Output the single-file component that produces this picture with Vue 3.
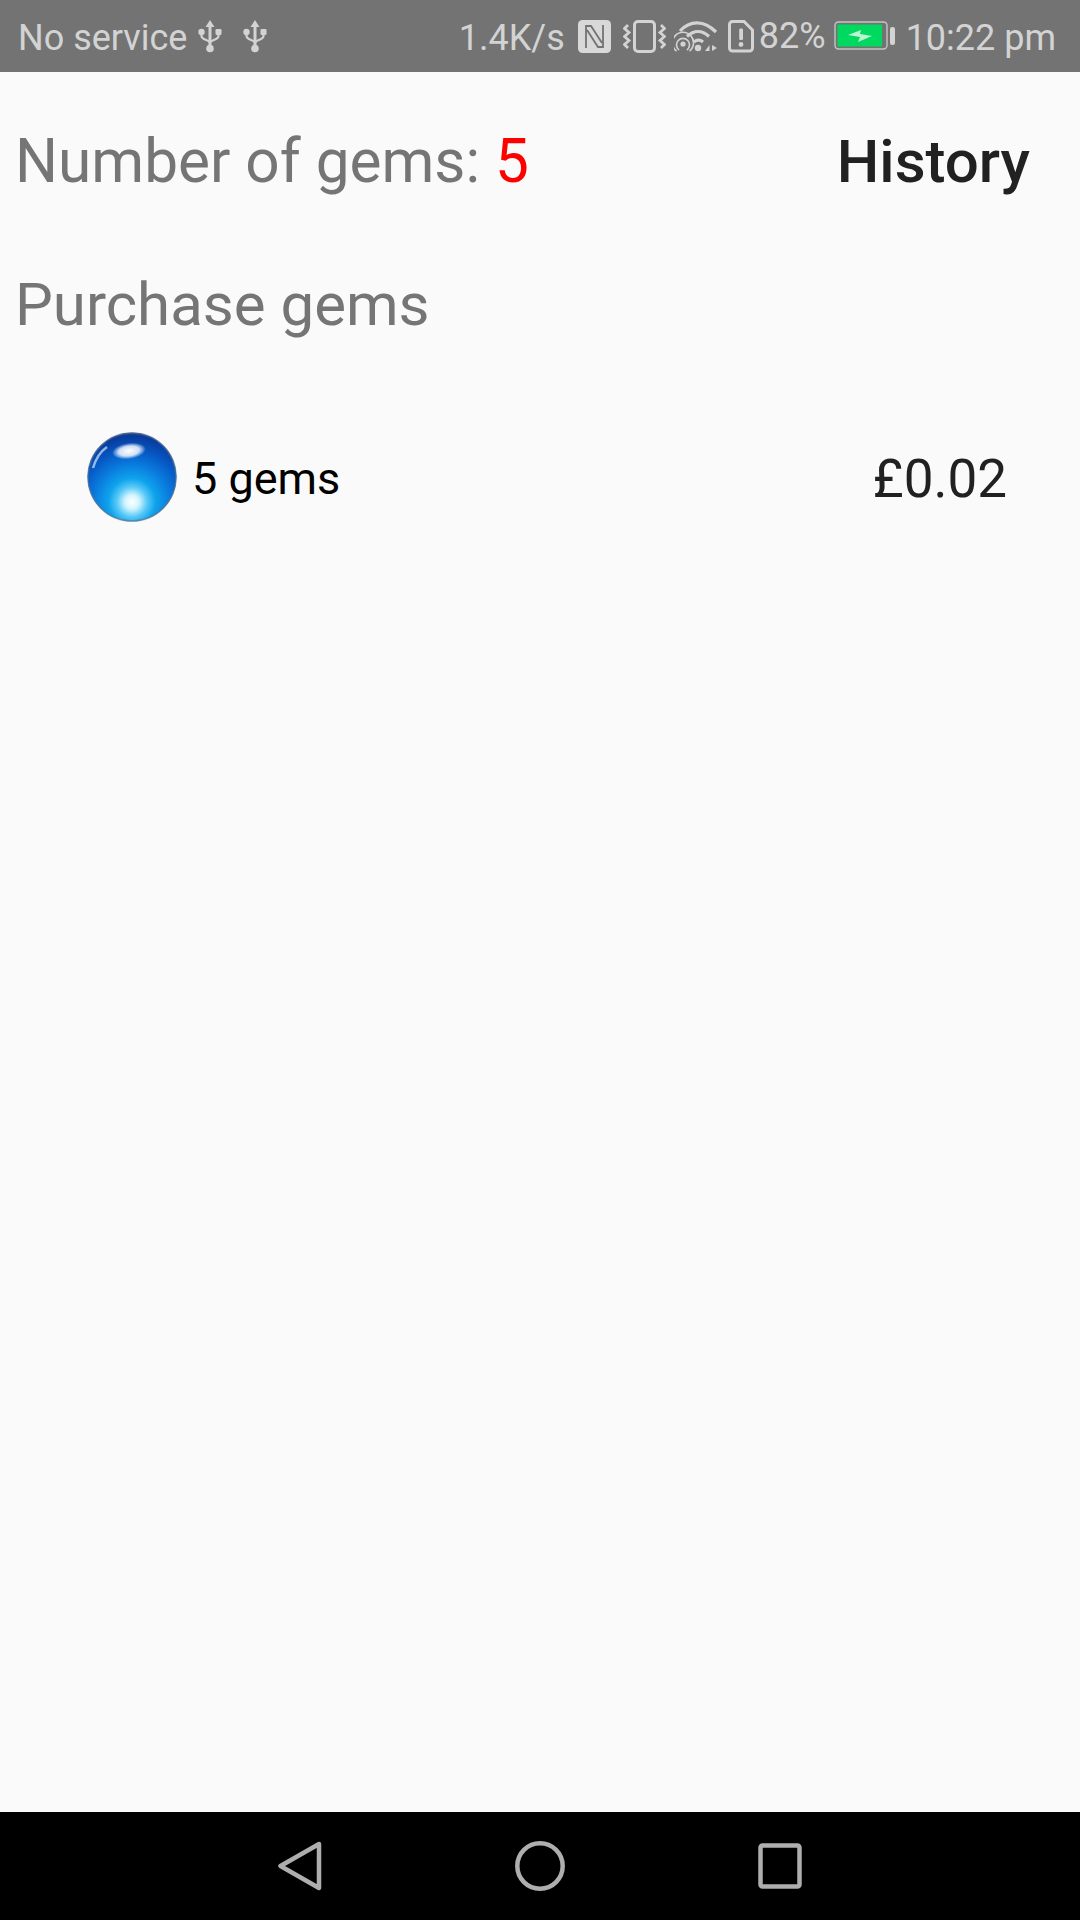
<template>
  <div class="screen">
    <!-- Status bar -->
    <div class="status-bar">
      <div class="status-left">
        <span class="status-text">No service</span>
        <svg class="usb" width="24" height="34" viewBox="0 0 24 34">
          <path d="M12 1l-4.5 7h3V27h3V8h3z" fill="#d3d3d3" />
          <circle cx="12" cy="29.5" r="3.8" fill="#d3d3d3" />
          <circle cx="3.5" cy="13" r="3.2" fill="#d3d3d3" />
          <rect x="17.5" y="10" width="6" height="6" rx="1.2" fill="#d3d3d3" />
          <path d="M3.5 14v3c0 4 8.5 4 8.5 7M20.5 14v3c0 4 -8.5 4 -8.5 7" fill="none" stroke="#d3d3d3" stroke-width="2.2" />
        </svg>
        <svg class="usb usb-second" width="24" height="34" viewBox="0 0 24 34">
          <path d="M12 1l-4.5 7h3V27h3V8h3z" fill="#d3d3d3" />
          <circle cx="12" cy="29.5" r="3.8" fill="#d3d3d3" />
          <circle cx="3.5" cy="13" r="3.2" fill="#d3d3d3" />
          <rect x="17.5" y="10" width="6" height="6" rx="1.2" fill="#d3d3d3" />
          <path d="M3.5 14v3c0 4 8.5 4 8.5 7M20.5 14v3c0 4 -8.5 4 -8.5 7" fill="none" stroke="#d3d3d3" stroke-width="2.2" />
        </svg>
      </div>
      <div class="status-right">
        <span class="status-text speed">1.4K/s</span>
        <!-- NFC -->
        <svg class="nfc" width="33" height="33" viewBox="0 0 33 33">
          <rect width="33" height="33" rx="4.5" fill="#d8d8d8" />
          <path d="M8 28V6h5l11 17M25 5v22h-5L9 10" fill="none" stroke="#737373" stroke-width="1.800" />
        </svg>
        <!-- Vibrate -->
        <svg class="vibrate" width="43" height="33" viewBox="0 0 43 33">
          <rect x="11.5" y="1.5" width="20" height="30" rx="3.5" fill="none" stroke="#d3d3d3" stroke-width="3" />
          <path d="M5 5L1.500 8.500 6 12.500 1.500 16.500 6 20.500 1.500 24.500 5 28M38 5l3.500 3.500-4.500 4 4.500 4-4.500 4 4.500 4-3.500 3.500" fill="none" stroke="#d3d3d3" stroke-width="2.800" />
        </svg>
        <!-- Wifi with hotspot -->
        <svg class="wifi" width="44" height="34" viewBox="0 0 44 34">
          <path d="M6 12C16 1 30 1 42 13M13 17.500c7-6.500 15-6.500 22 0M20 23c3-2.500 6-2.500 9 0" fill="none" stroke="#d3d3d3" stroke-width="3.200" />
          <circle cx="24" cy="29" r="3.200" fill="#d3d3d3" />
          <circle cx="9" cy="25" r="2.600" fill="#d3d3d3" />
          <path d="M5 31a6.500 6.500 0 1 1 8 0M2.500 32a10.500 10.500 0 1 1 13 0" fill="none" stroke="#d3d3d3" stroke-width="1.600" />
          <path d="M31 32l4.500-6v6zM38 26l5 3-5 3z" fill="#d3d3d3" />
        </svg>
        <!-- SIM alert -->
        <svg class="sim" width="26" height="33" viewBox="0 0 26 33">
          <path d="M4.500 1.500h11.500l8.500 8.500v18a3 3 0 0 1-3 3H4.500a3 3 0 0 1-3-3V4.500a3 3 0 0 1 3-3z" fill="none" stroke="#d3d3d3" stroke-width="3" />
          <rect x="11.200" y="8.500" width="3.800" height="11.500" rx="1.200" fill="#d3d3d3" />
          <circle cx="13" cy="24.500" r="2.400" fill="#d3d3d3" />
        </svg>
        <span class="status-text percent">82%</span>
        <!-- Battery -->
        <svg class="battery" width="61" height="30" viewBox="0 0 61 30">
          <rect x="1" y="1" width="52" height="27" rx="3.500" fill="none" stroke="#c4c4c4" stroke-width="1.400" />
          <rect x="3.500" y="3.500" width="44.500" height="22" fill="#00d95f" />
          <path d="M14 14l13-5-1 4 12 2-14 6 2-5z" fill="#bdf5d3" />
          <rect x="56" y="6" width="5" height="18" rx="2" fill="#d3d3d3" />
        </svg>
        <span class="status-text time">10:22 pm</span>
      </div>
    </div>

    <main class="content">
      <div class="top-row">
        <div class="gem-count">Number of gems: <span class="count">{{ gemCount }}</span></div>
        <div class="history">History</div>
      </div>
      <div class="purchase-title">Purchase gems</div>

      <div class="product" v-for="item in products" :key="item.name">
        <svg class="gem" width="90" height="90" viewBox="0 0 90 90">
          <defs>
            <radialGradient id="gemBody" cx="50%" cy="78%" r="78%">
              <stop offset="0" stop-color="#ffffff" />
              <stop offset="0.1" stop-color="#d4f5ff" />
              <stop offset="0.22" stop-color="#55c8f6" />
              <stop offset="0.34" stop-color="#0ea3ec" />
              <stop offset="0.52" stop-color="#0a7fe0" />
              <stop offset="0.72" stop-color="#065cc8" />
              <stop offset="0.95" stop-color="#083a9c" />
              <stop offset="1" stop-color="#27477f" />
            </radialGradient>
            <radialGradient id="gemShine" cx="50%" cy="50%" r="50%">
              <stop offset="0" stop-color="#ffffff" />
              <stop offset="0.6" stop-color="#f2f8ff" stop-opacity="0.85" />
              <stop offset="1" stop-color="#ffffff" stop-opacity="0" />
            </radialGradient>
          </defs>
          <circle cx="45" cy="45" r="44.500" fill="url(#gemBody)" />
          <circle cx="45" cy="45" r="44" fill="none" stroke="#5b7390" stroke-opacity="0.65" stroke-width="1.500" />
          <ellipse cx="42" cy="19" rx="17" ry="8" fill="url(#gemShine)" transform="rotate(-8 42 19)" />
          <path d="M6 36C9 26 14 19 20 15" fill="none" stroke="#cfe4fb" stroke-opacity="0.7" stroke-width="2.500" />
        </svg>
        <span class="product-name">{{ item.name }}</span>
        <span class="product-price">{{ item.price }}</span>
      </div>
    </main>

    <!-- Navigation bar -->
    <div class="nav-bar">
      <svg width="44" height="52" viewBox="0 0 44 52">
        <path d="M41 4L2.500 26 41 48z" fill="none" stroke="#aeaeae" stroke-width="4.500" stroke-linejoin="round" />
      </svg>
      <svg width="50" height="50" viewBox="0 0 50 50">
        <circle cx="25" cy="25" r="22.700" fill="none" stroke="#aeaeae" stroke-width="4.500" />
      </svg>
      <svg width="44" height="46" viewBox="0 0 44 46">
        <rect x="2.500" y="2.500" width="39" height="41" rx="2" fill="none" stroke="#aeaeae" stroke-width="4.500" />
      </svg>
    </div>
  </div>
</template>

<script setup>
import { ref } from "vue";

const gemCount = ref(5);

const products = [{ name: "5 gems", price: "£0.02" }];
</script>

<style>
body {
  background: #fafafa;
}
</style>

<style scoped>
.screen {
  width: 1080px;
  height: 1920px;
  display: flex;
  flex-direction: column;
  background: #fafafa;
  font-family: Roboto, sans-serif;
  overflow: hidden;
}

.status-bar {
  height: 72px;
  flex: none;
  display: flex;
  align-items: center;
  justify-content: space-between;
  background: #737373;
  padding: 0 24px 0 18px;
}

.status-left,
.status-right {
  display: flex;
  align-items: center;
}

.status-text {
  color: #d3d3d3;
  font-size: 36px;
  line-height: 68px;
  padding-top: 4px;
  white-space: nowrap;
}

.usb {
  margin-left: 11px;
}

.usb-second {
  margin-left: 21px;
}

.nfc {
  margin-left: 13px;
}

.vibrate {
  margin-left: 12px;
}

.wifi {
  margin-left: 8px;
}

.sim {
  margin-left: 10px;
}

.percent {
  margin-left: 5px;
  margin-bottom: 4px;
}

.battery {
  margin-left: 8px;
}

.time {
  margin-left: 11px;
}

.content {
  flex: 1;
  padding: 0 15px;
}

.top-row {
  display: flex;
  justify-content: space-between;
  align-items: center;
  height: 144px;
  margin-top: 17px;
  padding-right: 35px;
}

.gem-count {
  font-size: 60.3px;
  color: #757575;
}

.purchase-title {
  font-size: 60px;
  color: #757575;
  line-height: 70px;
  margin-top: 37px;
}

.count {
  color: #ff0000;
}

.history {
  font-size: 60px;
  font-weight: 500;
  color: #212121;
}

.product {
  display: flex;
  align-items: center;
  margin-top: 92px;
  padding: 0 58px 0 72px;
}

.gem {
  flex: none;
}

.product-name {
  margin-left: 15px;
  padding-top: 2px;
  font-size: 45px;
  color: #000000;
}

.product-price {
  margin-left: auto;
  padding-top: 4px;
  font-size: 53px;
  color: #212121;
}

.nav-bar {
  height: 108px;
  flex: none;
  background: #000000;
  display: flex;
  align-items: center;
  justify-content: space-between;
  padding: 0 278px;
}
</style>
